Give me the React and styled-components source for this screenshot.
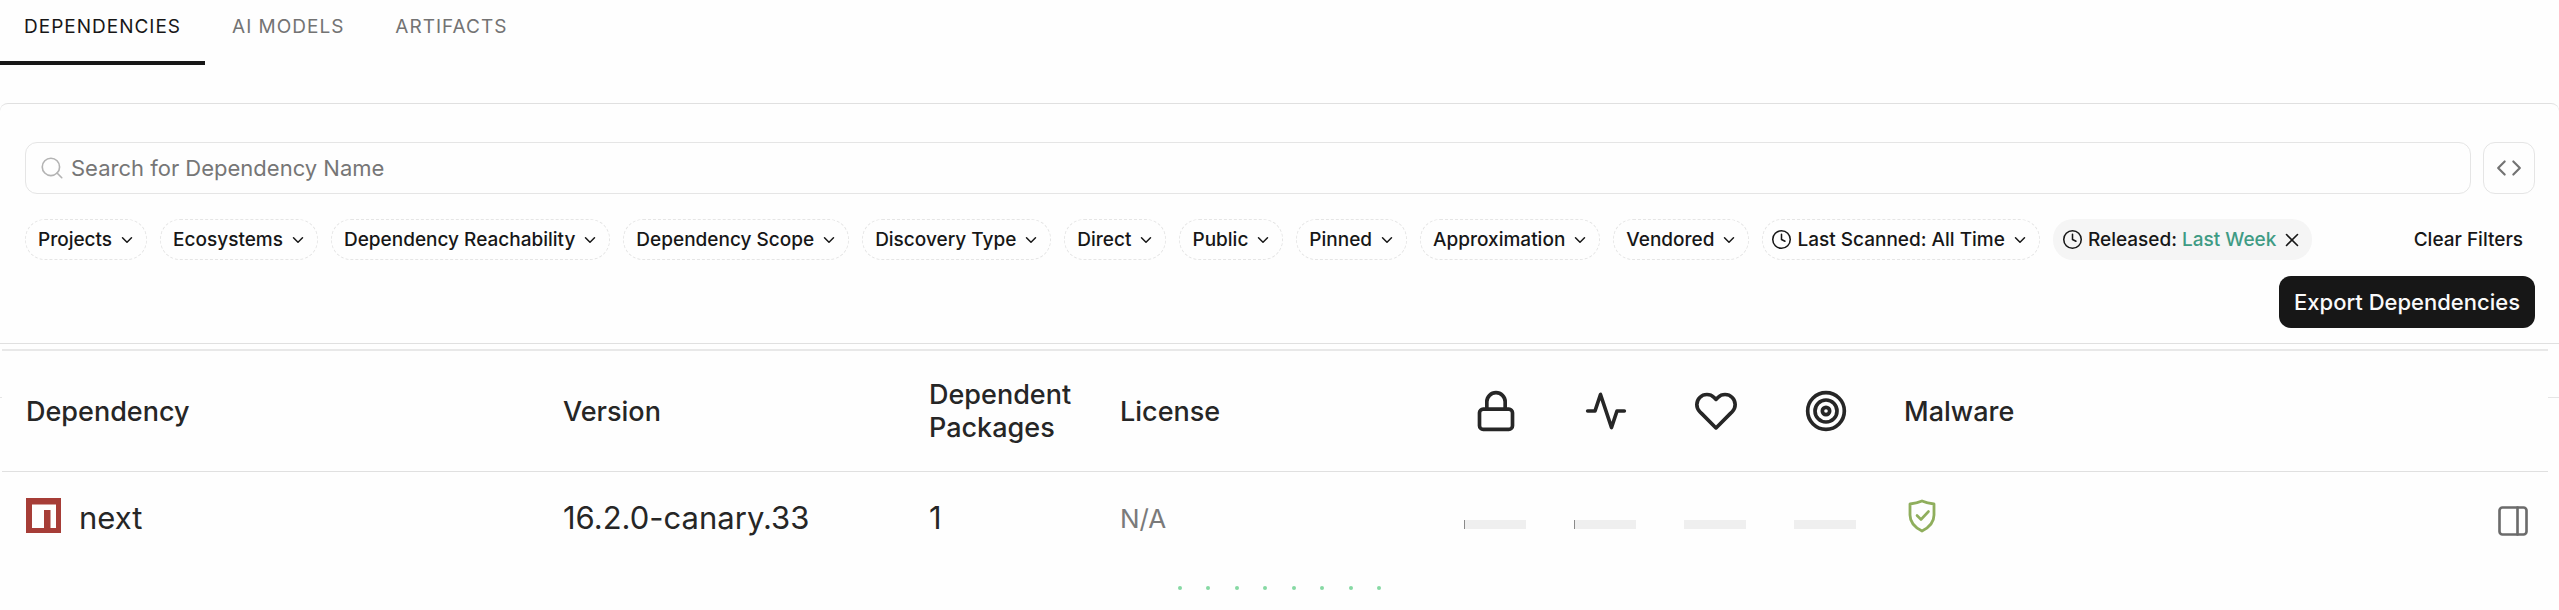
import React from 'react';
import { useState } from 'react';
import styled, { createGlobalStyle } from 'styled-components';
import { ChevronDown, Clock, Code, PanelRight, Search, X } from 'lucide-react';
import { FiActivity, FiHeart, FiLock, FiTarget } from 'react-icons/fi';

const GlobalStyle = createGlobalStyle`
  * {
    box-sizing: border-box;
  }

  body {
    margin: 0;
    background: #fefefe;
    color: #171717;
    font-family: Inter, "Liberation Sans", sans-serif;
  }

  button, input {
    font-family: inherit;
    color: inherit;
  }

  button {
    padding: 0;
    border: none;
    background: none;
    cursor: pointer;
  }
`;

const Tabs = styled.nav`
  display: flex;
  gap: 3px;
  margin-bottom: 38px;
`;

const Tab = styled.button`
  padding: 15px 24px 22px;
  border-bottom: 4px solid ${(props) => (props.$active ? '#171717' : 'transparent')};
  color: ${(props) => (props.$active ? '#171717' : '#737373')};
  font-size: 19px;
  line-height: 24px;
  letter-spacing: 1px;
  text-transform: uppercase;
`;

const FilterPanel = styled.section`
  display: flex;
  flex-direction: column;
  padding: 38px 24px 15px 25px;
  border: solid #e0e0e0;
  border-width: 1px 0;
  border-radius: 8px 8px 0 0;
`;

const SearchRow = styled.div`
  display: flex;
  gap: 12px;
  margin-bottom: 25px;
`;

const SearchBox = styled.label`
  flex: 1;
  display: flex;
  align-items: center;
  gap: 6px;
  height: 52px;
  padding: 0 13px;
  border: 1px solid #e5e5e5;
  border-radius: 12px;
  color: #b3b3b3;
`;

const SearchInput = styled.input`
  flex: 1;
  min-width: 0;
  padding: 0;
  border: none;
  outline: none;
  background: none;
  color: #171717;
  font-size: 22px;
  line-height: 30px;

  &::placeholder {
    color: #767676;
    opacity: 1;
  }
`;

const CodeButton = styled.button`
  display: flex;
  align-items: center;
  justify-content: center;
  width: 52px;
  border: 1px solid #e5e5e5;
  border-radius: 12px;
  color: #737373;
`;

const FilterRow = styled.div`
  display: flex;
  justify-content: space-between;
  align-items: flex-start;
  margin-bottom: 16px;
`;

const Filters = styled.div`
  display: flex;
  flex-wrap: wrap;
  gap: 13px;
`;

const FilterButton = styled.button`
  display: flex;
  align-items: center;
  gap: 6px;
  height: 41px;
  padding: 0 10px 0 ${(props) => (props.$withIcon ? '8px' : '12px')};
  border: 1px dashed #e5e5e5;
  border-radius: 20px;
  font-size: 19px;
  font-weight: 500;
  white-space: nowrap;
`;

const FilterLabel = styled.span`
  display: flex;
  align-items: center;
  gap: 5px;
  white-space: pre;
`;

const ActiveFilter = styled.div`
  display: flex;
  align-items: center;
  gap: 5px;
  height: 41px;
  padding: 0 9px;
  border-radius: 20px;
  background: #f5f5f5;
`;

const ActiveFilterButton = styled.button`
  font-size: 19px;
  font-weight: 500;
`;

const FilterValue = styled.span`
  color: #3f9b84;
`;

const RemoveButton = styled.button`
  display: flex;
`;

const ClearButton = styled.button`
  height: 41px;
  padding: 0 12px;
  font-size: 19px;
  font-weight: 500;
  white-space: nowrap;
`;

const ExportButton = styled.button`
  align-self: flex-end;
  height: 52px;
  padding: 0 15px;
  border-radius: 12px;
  background: #171717;
  color: #fafafa;
  font-size: 22px;
  font-weight: 500;
`;

// the rule of the outer panel runs behind the table and shows at its edges
const TablePanel = styled.section`
  position: relative;
  padding: 5px 11px 0 2px;

  &::before {
    content: "";
    position: absolute;
    top: 53px;
    left: 0;
    right: 0;
    border-top: 1px solid #e5e5e5;
  }
`;

const Table = styled.table`
  position: relative;
  width: 100%;
  table-layout: fixed;
  border-collapse: separate;
  border-spacing: 0;
  border-top: 2px solid #e8e8e8;
  background: #fefefe;
`;

const HeaderCell = styled.th`
  width: ${(props) => props.$width};
  height: 121px;
  padding: 0 22px 0 24px;
  border-bottom: 1px solid #e0e0e0;
  color: #262626;
  font-size: 27px;
  font-weight: 500;
  line-height: 33px;
  text-align: ${(props) => (props.$center ? 'center' : 'left')};

  svg {
    display: block;
    margin: 0 auto;
  }
`;

const Cell = styled.td`
  height: 92px;
  padding: 0 ${(props) => (props.$last ? '17px' : '22px')} 0 24px;
  color: #262626;
  font-size: 31px;
  line-height: 36px;
`;

const Package = styled.div`
  display: flex;
  align-items: center;
  gap: 18px;
`;

const Muted = styled.span`
  color: #7a7a7a;
  font-size: 26px;
`;

const Score = styled.div`
  width: 62px;
  height: 9px;
  margin-top: 13px;
  border-left: 1px solid ${(props) => (props.$marked ? '#8a8a8a' : '#efefef')};
  background: #efefef;
`;

const PanelButton = styled.button`
  display: flex;
  margin: 5px 0 0 auto;
  color: #6b6b6b;
`;

const ShieldIcon = styled.svg`
  display: block;
`;

const Loader = styled.div`
  display: flex;
  justify-content: space-between;
  width: 204px;
  margin: 22px auto 0;
`;

const Dot = styled.span`
  width: 4px;
  height: 4px;
  border-radius: 50%;
  background: #86d9a3;
`;

const NpmLogo = () => (
  <svg width="35" height="40" viewBox="0 0 35 40" role="img" aria-label="npm">
    <path fill="#a63d37" d="M0 0h35v35H0z" />
    <path fill="#fefefe" d="M6 6.500h24V30h-5.500V12H18v18H6z" />
  </svg>
);

const ShieldCheck = () => (
  <ShieldIcon width="36" height="39" viewBox="-4 0 36 39" fill="none" stroke="#8fae5c" role="img" aria-label="No malware found">
    <path strokeWidth="2.800" strokeLinejoin="round" d="M14 2C10.500 3.600 6.500 4.600 2 5v11c0 7.500 5 12.500 12 16 7-3.500 12-8.500 12-16V5c-4.500-.4-8.500-1.400-12-3z" />
    <path strokeWidth="2.600" strokeLinecap="round" strokeLinejoin="round" d="M9 16.500l4 4 7.500-8" />
  </ShieldIcon>
);

const tabs = ['Dependencies', 'AI Models', 'Artifacts'];

const filters = [
  'Projects',
  'Ecosystems',
  'Dependency Reachability',
  'Dependency Scope',
  'Discovery Type',
  'Direct',
  'Public',
  'Pinned',
  'Approximation',
  'Vendored',
];

const scores = [
  { name: 'Security', Icon: FiLock, marked: true },
  { name: 'Activity', Icon: FiActivity, marked: true },
  { name: 'Popularity', Icon: FiHeart, marked: false },
  { name: 'Quality', Icon: FiTarget, marked: false },
];

const dependencies = [
  { name: 'next', version: '16.2.0-canary.33', dependents: 1, license: 'N/A' },
];

const App = () => {
  const [activeTab, setActiveTab] = useState('Dependencies');
  const [query, setQuery] = useState('');

  return (
    <>
      <GlobalStyle />
      <Tabs>
        {tabs.map((tab) => (
          <Tab key={tab} $active={tab === activeTab} onClick={() => setActiveTab(tab)}>{tab}</Tab>
        ))}
      </Tabs>

      <FilterPanel>
        <SearchRow>
          <SearchBox>
            <Search size={26} strokeWidth={1.5} />
            <SearchInput
              type="text"
              aria-label="Search for Dependency Name"
              placeholder="Search for Dependency Name"
              value={query}
              onChange={(e) => setQuery(e.target.value)}
            />
          </SearchBox>
          <CodeButton aria-label="Query editor">
            <Code size={26} />
          </CodeButton>
        </SearchRow>

        <FilterRow>
          <Filters>
            {filters.map((filter) => (
              <FilterButton key={filter} aria-haspopup="listbox">
                {filter}
                <ChevronDown size={18} />
              </FilterButton>
            ))}
            <FilterButton $withIcon aria-haspopup="listbox">
              <FilterLabel><Clock size={21} strokeWidth={1.75} />Last Scanned: All Time</FilterLabel>
              <ChevronDown size={18} />
            </FilterButton>
            <ActiveFilter>
              <ActiveFilterButton aria-haspopup="listbox">
                <FilterLabel>
                  <Clock size={21} strokeWidth={1.75} />
                  <span>Released: <FilterValue>Last Week</FilterValue></span>
                </FilterLabel>
              </ActiveFilterButton>
              <RemoveButton aria-label="Remove released filter">
                <X size={22} strokeWidth={1.75} />
              </RemoveButton>
            </ActiveFilter>
          </Filters>
          <ClearButton>Clear Filters</ClearButton>
        </FilterRow>

        <ExportButton>Export Dependencies</ExportButton>
      </FilterPanel>

      <TablePanel>
        <Table>
          <thead>
            <tr>
              <HeaderCell $width="537px">Dependency</HeaderCell>
              <HeaderCell $width="366px">Version</HeaderCell>
              <HeaderCell $width="191px">Dependent Packages</HeaderCell>
              <HeaderCell $width="344px">License</HeaderCell>
              {scores.map(({ name, Icon }) => (
                <HeaderCell key={name} $width="110px" $center aria-label={name}>
                  <Icon size={44} />
                </HeaderCell>
              ))}
              <HeaderCell $width="auto">Malware</HeaderCell>
              <HeaderCell $width="110px" aria-label="Details" />
            </tr>
          </thead>
          <tbody>
            {dependencies.map((dep) => (
              <tr key={dep.name}>
                <Cell><Package><NpmLogo />{dep.name}</Package></Cell>
                <Cell>{dep.version}</Cell>
                <Cell>{dep.dependents}</Cell>
                <Cell><Muted>{dep.license}</Muted></Cell>
                {scores.map(({ name, marked }) => (
                  <Cell key={name}><Score $marked={marked} /></Cell>
                ))}
                <Cell><ShieldCheck /></Cell>
                <Cell $last>
                  <PanelButton aria-label="Open details">
                    <PanelRight size={36} strokeWidth={1.75} />
                  </PanelButton>
                </Cell>
              </tr>
            ))}
          </tbody>
        </Table>
      </TablePanel>

      <Loader aria-label="Loading">
        {[...Array(8)].map((_, i) => <Dot key={i} />)}
      </Loader>
    </>
  );
};

export default App;
